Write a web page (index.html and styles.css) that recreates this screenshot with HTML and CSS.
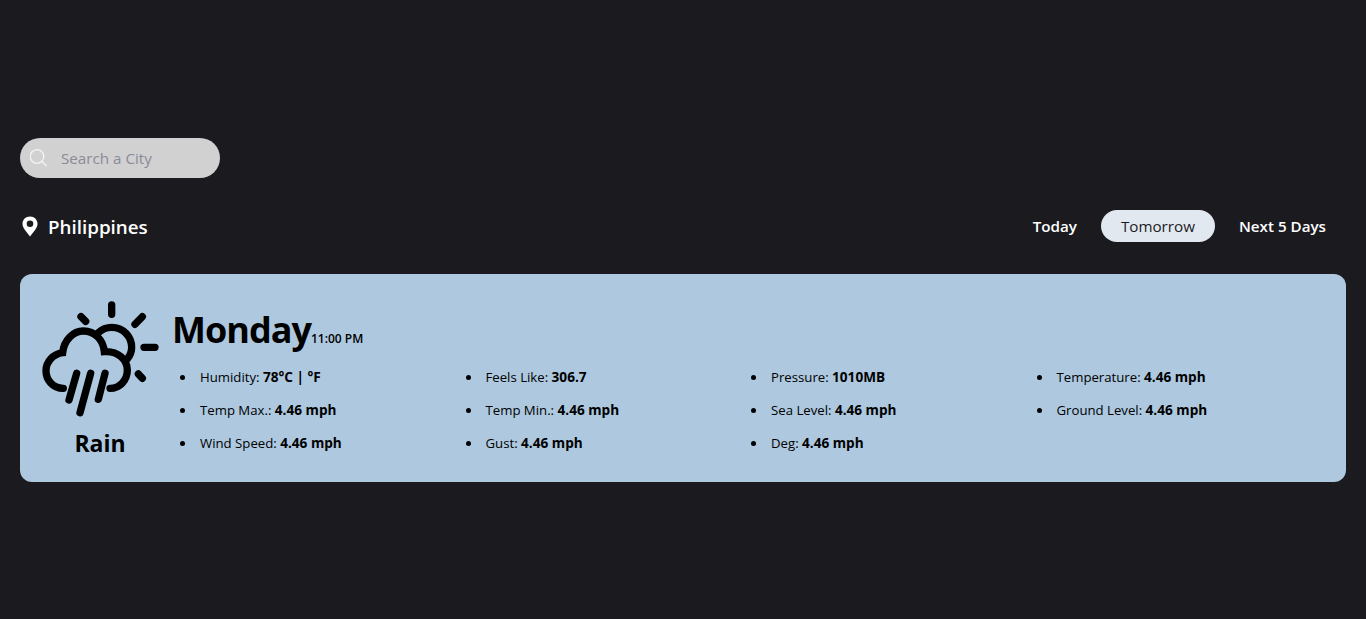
FILE: index.html
```html
<!DOCTYPE html>
<html lang="en">
<head>
    <meta charset="UTF-8">
    <meta name="viewport" content="width=device-width, initial-scale=1.0">
    <title>Weather</title>
    <link rel="stylesheet" href="styles.css">
</head>
<body>
    <div class="container">
        <div class="search">
            <svg class="search-icon" viewBox="0 0 20 20" width="20" height="20">
                <circle cx="7" cy="8.500" r="6.800"></circle>
                <path d="M12 13.500L16.500 18"></path>
            </svg>
            <input type="text" placeholder="Search a City">
        </div>

        <div class="toolbar">
            <div class="location">
                <svg class="pin" viewBox="0 0 16 22" width="16" height="22">
                    <path fill-rule="evenodd" d="M8 .500C3.600 .500 .500 3.700 .500 7.800c0 2.300 1 4.200 2.600 6.400L8 20.500l4.900-6.300c1.600-2.200 2.600-4.100 2.600-6.400C15.500 3.700 12.400 .500 8 .500zm0 4a3.300 3.300 0 1 1 0 6.600 3.300 3.300 0 0 1 0-6.600z"></path>
                </svg>
                <span>Philippines</span>
            </div>
            <div class="tabs">
                <button type="button" class="tab">Today</button>
                <button type="button" class="tab active">Tomorrow</button>
                <button type="button" class="tab">Next 5 Days</button>
            </div>
        </div>

        <div class="card">
            <div class="condition">
                <svg class="weather-icon" viewBox="60 60 360 360" width="120" height="120">
                    <path d="M275 75V103M345 133L367 110M372 202H405M355 282L367 295M183 110L197 124"></path>
                    <path d="M235 158C248 146 262 142 275 142C310 142 335 170 335 202C335 215 331 226 322 237"></path>
                    <path d="M130 325C97 325 78 298 78 272C78 245 100 222 128 218C132 180 160 153 190 153C225 153 250 180 253 215C295 212 322 240 322 270C322 300 300 325 270 325"></path>
                    <path d="M147 360L170 280M180 398L212 280M235 358L255 280"></path>
                </svg>
                <div class="condition-name">Rain</div>
            </div>
            <div class="details">
                <div class="heading">
                    <span class="day">Monday</span><span class="time">11:00 PM</span>
                </div>
                <ul class="stats">
                    <li>Humidity: <b>78°C | °F</b></li>
                    <li>Feels Like: <b>306.7</b></li>
                    <li>Pressure: <b>1010MB</b></li>
                    <li>Temperature: <b>4.46 mph</b></li>
                    <li>Temp Max.: <b>4.46 mph</b></li>
                    <li>Temp Min.: <b>4.46 mph</b></li>
                    <li>Sea Level: <b>4.46 mph</b></li>
                    <li>Ground Level: <b>4.46 mph</b></li>
                    <li>Wind Speed: <b>4.46 mph</b></li>
                    <li>Gust: <b>4.46 mph</b></li>
                    <li>Deg: <b>4.46 mph</b></li>
                </ul>
            </div>
        </div>
    </div>
</body>
</html>
```

FILE: styles.css
```css
* {
    box-sizing: border-box;
}

body {
    margin: 0;
    height: 100vh;
    background-color: #1b1b1f;
    font-family: "Open Sans", "Noto Sans", sans-serif;
    color: #000;
}

.container {
    padding: 138px 20px 0;
}

.search {
    display: flex;
    align-items: center;
    width: 200px;
    height: 40px;
    padding-left: 10px;
    border-radius: 20px;
    background-color: #d1d1d1;
}

.search-icon {
    flex: none;
    fill: none;
    stroke: #f4f4f4;
    stroke-width: 1.3;
}

.search input {
    width: 150px;
    margin-left: 11px;
    padding: 0;
    border: none;
    outline: none;
    background: transparent;
    font: inherit;
    font-size: 15.2px;
}

.search input::placeholder {
    color: #8b8b98;
}

.toolbar {
    display: flex;
    justify-content: space-between;
    align-items: center;
    height: 32px;
    margin-top: 32px;
}

.location {
    display: flex;
    align-items: center;
    gap: 10px;
    padding: 1px 0 0 2px;
    color: #fff;
    font-size: 18.800px;
    font-weight: 600;
}

.pin {
    fill: #fff;
}

.tabs {
    display: flex;
    align-items: center;
    gap: 4px;
}

.tab {
    height: 32px;
    padding: 0 20px;
    border: none;
    border-radius: 16px;
    background: transparent;
    color: #fff;
    font: inherit;
    font-size: 15.200px;
    font-weight: 600;
}

.tab.active {
    background-color: #e2e8f0;
    color: #1b1b1f;
    font-weight: 400;
}

.card {
    display: flex;
    gap: 13px;
    height: 208px;
    margin-top: 32px;
    padding: 26px 20px 0;
    border-radius: 12px;
    background-color: #adc8df;
}

.condition {
    width: 120px;
    text-align: center;
}

.weather-icon {
    display: block;
    fill: none;
    stroke: #000;
    stroke-width: 22;
    stroke-linecap: round;
}

.condition-name {
    margin-top: 7px;
    font-size: 23px;
    font-weight: 700;
}

.details {
    flex: 1;
}

.heading {
    height: 50px;
    padding-top: 5px;
    white-space: nowrap;
}

.day {
    margin-left: -1px;
    font-size: 36px;
    font-weight: 700;
    letter-spacing: -1px;
    line-height: 50px;
}

.time {
    font-size: 12px;
    font-weight: 600;
}

.stats {
    display: grid;
    grid-template-columns: repeat(4, 285.5px);
    grid-auto-rows: 33px;
    align-items: center;
    margin: 10px 0 0;
    padding: 0 0 0 27px;
    list-style: none;
    font-size: 13.200px;
}

.stats li::before {
    content: "";
    display: inline-block;
    width: 5px;
    height: 5px;
    margin: 0 15px 2px -20px;
    border-radius: 50%;
    background-color: #000;
}

.stats b {
    font-size: 13.600px;
    font-weight: 700;
}
```
